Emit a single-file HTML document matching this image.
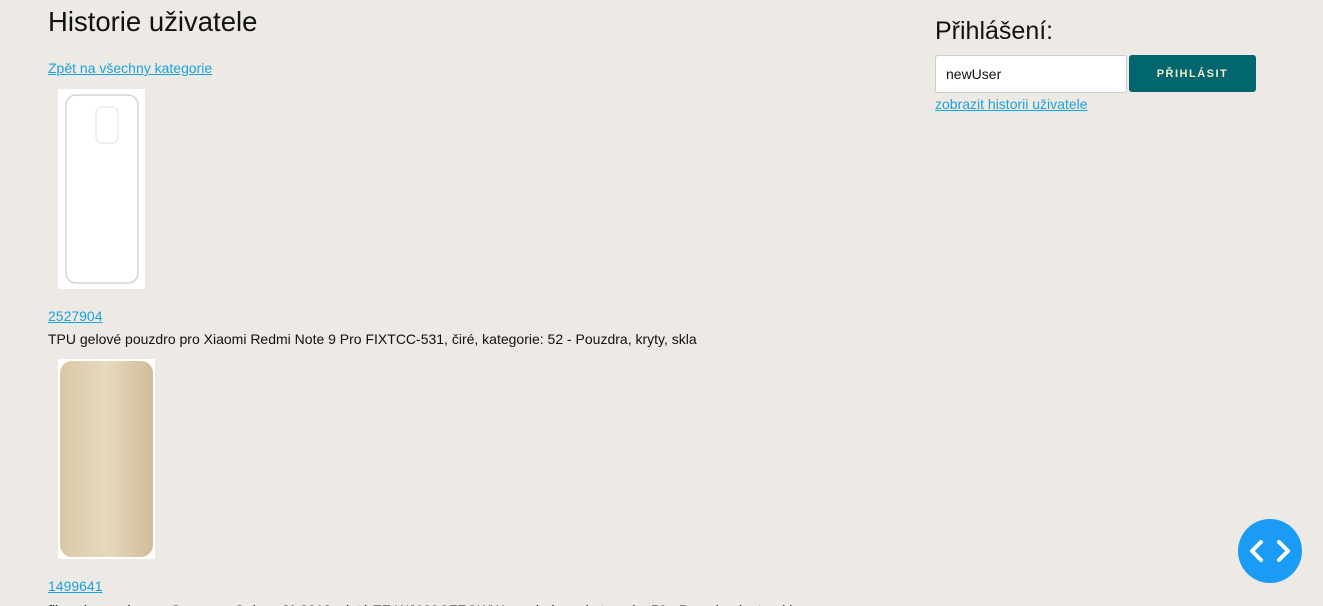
<!DOCTYPE html>
<html><head><meta charset="utf-8"><style>
html,body{margin:0;width:1323px;height:606px;overflow:hidden}
body{background:#ede9e4;font-family:"Liberation Sans",Arial,sans-serif;color:#111;position:relative}
.a{position:absolute;white-space:nowrap}
a{color:#1aa3dc;text-decoration:underline;font-size:14px}
.t{font-size:14px}
</style></head><body>
<div class="a" style="left:48px;top:6px;font-size:27.5px">Historie uživatele</div>
<a class="a" style="left:48px;top:60px">Zpět na všechny kategorie</a>
<div class="a" style="left:58px;top:89px;width:87px;height:200px;background:#fff">
<svg width="87" height="200"><rect x="8" y="6" width="72" height="188" rx="10" fill="none" stroke="#d4d4d4" stroke-width="1.5"/><rect x="38" y="18" width="22" height="36" rx="6" fill="none" stroke="#e2e2e2"/></svg></div>
<a class="a" style="left:48px;top:308px">2527904</a>
<div class="a t" style="left:48px;top:331px">TPU gelové pouzdro pro Xiaomi Redmi Note 9 Pro FIXTCC-531, čiré, kategorie: 52 - Pouzdra, kryty, skla</div>
<div class="a" style="left:58px;top:359px;width:97px;height:200px;background:#fff">
<svg width="97" height="200"><defs><linearGradient id="g" x1="0" x2="1"><stop offset="0" stop-color="#d8c8a6"/><stop offset=".5" stop-color="#e6d9bd"/><stop offset="1" stop-color="#cfbd98"/></linearGradient></defs><rect x="2" y="2" width="93" height="196" rx="12" fill="url(#g)"/></svg></div>
<a class="a" style="left:48px;top:578px">1499641</a>
<div class="a t" style="left:48px;top:602px">flipové pouzdro pro Samsung Galaxy J6 2018, zlaté EF-WJ600CFEGWW - rozbaleno, kategorie: 59 - Pouzdra, kryty, skla</div>
<div class="a" style="left:935px;top:17px;font-size:25px">Přihlášení:</div>
<div class="a" style="left:935px;top:55px;width:190px;height:36px;background:#fff;border:1px solid #ccc;border-radius:3px;font-size:14px;line-height:36px;text-indent:10px">newUser</div>
<div class="a" style="left:1129px;top:55px;width:127px;height:37px;background:#02666e;border-radius:3px;color:#f3ecc8;font-size:11px;font-weight:bold;letter-spacing:1.5px;text-align:center;line-height:38px">PŘIHLÁSIT</div>
<a class="a" style="left:935px;top:96px">zobrazit historii uživatele</a>
<div class="a" style="left:1238px;top:519px;width:64px;height:64px;border-radius:50%;background:#1a9bf5">
<svg width="64" height="64"><path d="M23 23 L14 32 L23 41 M41 23 L50 32 L41 41" fill="none" stroke="#fff" stroke-width="4" stroke-linecap="round" stroke-linejoin="round"/></svg></div>
</body></html>
